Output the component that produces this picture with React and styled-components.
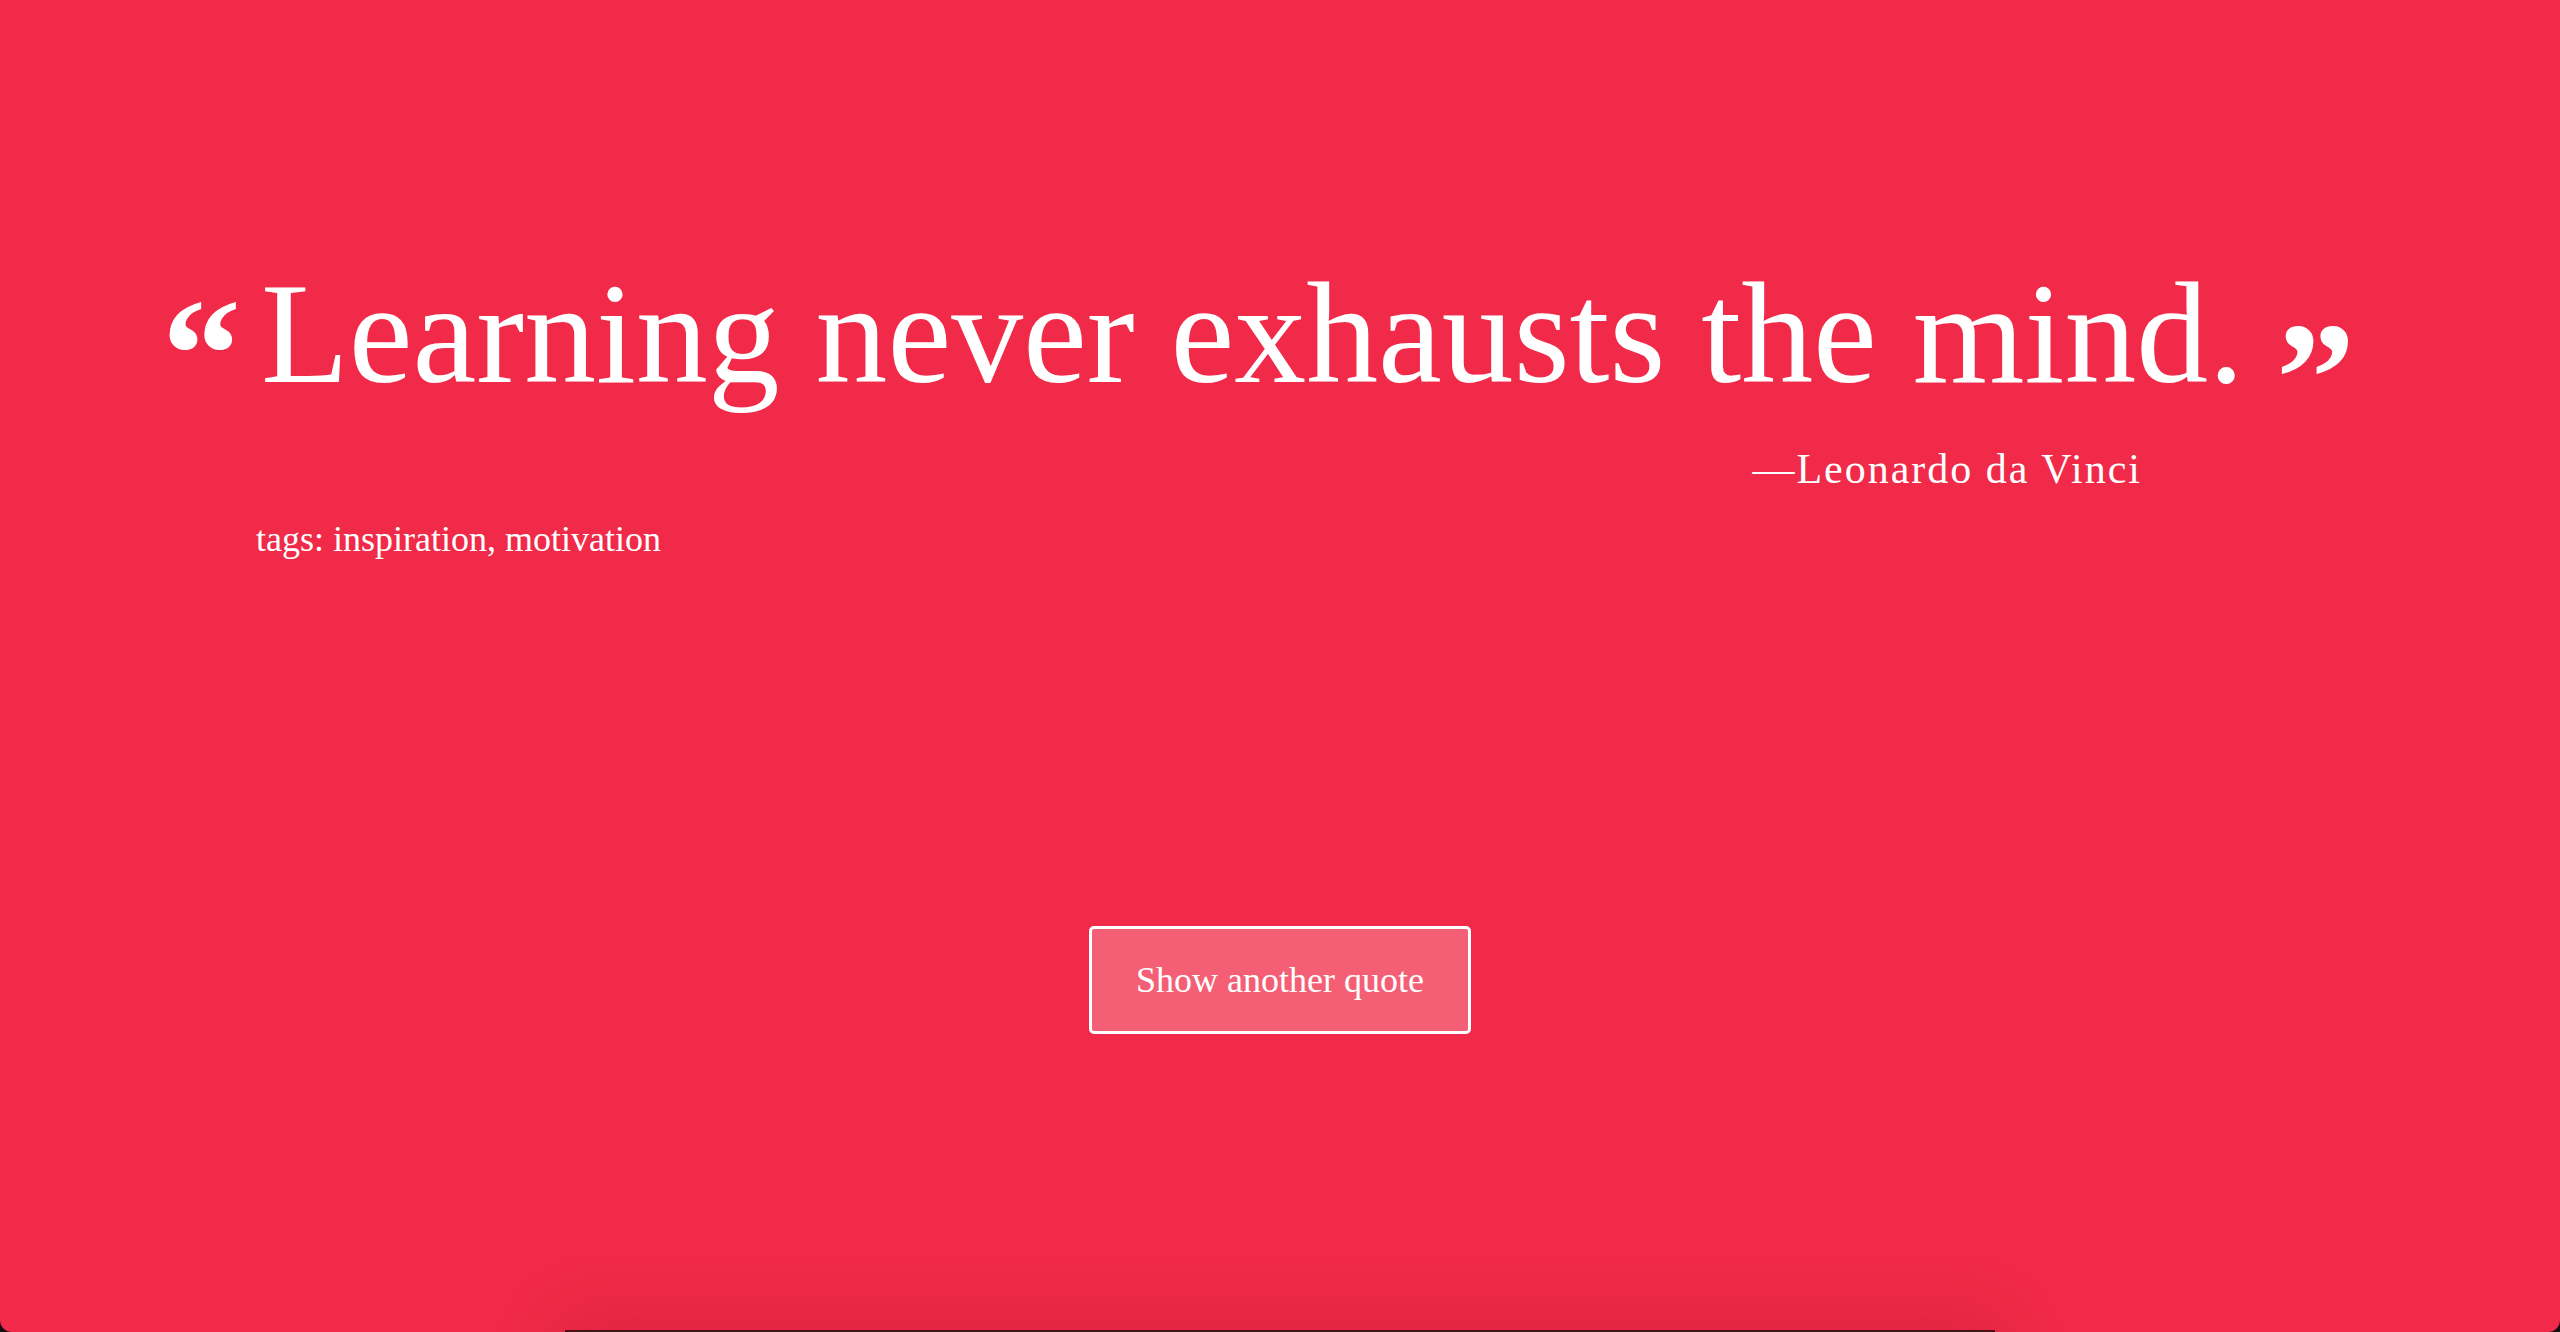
import styled, { createGlobalStyle } from "styled-components";

const GlobalStyle = createGlobalStyle`
  html, body {
    margin: 0;
    padding: 0;
    background: #111;
    overflow: hidden;
  }
  * {
    box-sizing: border-box;
  }
`;

const Window = styled.div`
  height: 1332px;
  overflow: hidden;
  background-color: #f02a48;
  border-radius: 0 0 12px 12px;
  font-family: "Liberation Serif", "Times New Roman", serif;
  color: #fff;
`;

const Hero = styled.main`
  height: 1330px;
  display: flex;
  flex-direction: column;
  padding: 248px 0 0 168px;
`;

const QuoteText = styled.h1`
  margin: 0;
  font-size: 143.7px;
  font-weight: 400;
  line-height: 1.2;
  white-space: nowrap;
`;

const Mark = styled.span`
  display: inline-block;
  font-weight: 700;
  font-size: 158px;
  line-height: 0;
  vertical-align: ${(p) => (p.$close ? "-50px" : "-26px")};
  margin: ${(p) => (p.$close ? "0 0 0 32px" : "0 20px 0 -6px")};
`;

const Author = styled.p`
  margin: 24px 0 0;
  padding-right: 418px;
  text-align: right;
  font-size: 42px;
  line-height: 1.2;
  letter-spacing: 2px;
`;

const Tags = styled.p`
  margin: 23px 0 0 88px;
  font-size: 36px;
  line-height: 1.2;
`;

const Button = styled.button`
  align-self: center;
  margin: 365px 0 0 -168px;
  width: 382px;
  height: 108px;
  border: 3px solid #fff;
  border-radius: 5px;
  background-color: rgba(255, 255, 255, 0.25);
  color: #fff;
  font-family: inherit;
  font-size: 36px;
  cursor: pointer;
`;

const Footer = styled.footer`
  width: 1430px;
  height: 200px;
  margin: 0 auto;
  background-color: #4a1019;
  box-shadow: 0 -4px 70px 6px rgba(110, 0, 25, 0.16);
`;

const App = () => {
  return (
    <>
      <GlobalStyle />
      <Window>
        <Hero>
          <QuoteText>
            <Mark>“</Mark>
            Learning never exhausts the mind.
            <Mark $close>”</Mark>
          </QuoteText>
          <Author>—Leonardo da Vinci</Author>
          <Tags>tags: inspiration, motivation</Tags>
          <Button>Show another quote</Button>
        </Hero>
        <Footer />
      </Window>
    </>
  );
};

export default App;
